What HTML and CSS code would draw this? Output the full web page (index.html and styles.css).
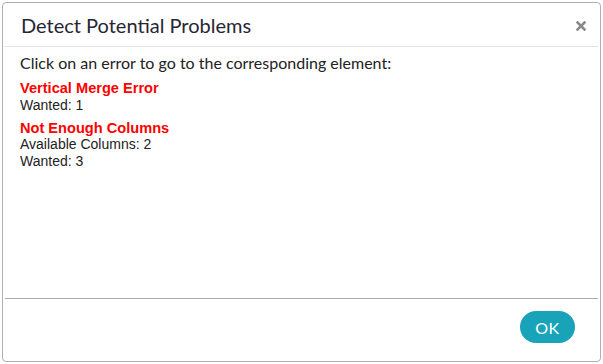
FILE: index.html
```html
<!DOCTYPE html>
<html>
<head>
<meta charset="utf-8">
<link rel="stylesheet" href="styles.css">
</head>
<body>
<div class="modal">
  <div class="modal-header">
    <h4 class="modal-title">Detect Potential Problems</h4>
    <button class="close" aria-label="Close">
      <svg width="10" height="10" viewBox="0 0 10 10"><path d="M1.5 1.5 L8.5 8.5 M8.5 1.5 L1.5 8.5" stroke="#8a8a8a" stroke-width="2.6" stroke-linecap="square"/></svg>
    </button>
  </div>
  <div class="modal-body">
    <p class="intro">Click on an error to go to the corresponding element:</p>
    <div class="error">
      <div class="error-title">Vertical Merge Error</div>
      <div class="error-line">Wanted: 1</div>
    </div>
    <div class="error">
      <div class="error-title">Not Enough Columns</div>
      <div class="error-line">Available Columns: 2</div>
      <div class="error-line">Wanted: 3</div>
    </div>
  </div>
  <div class="modal-footer">
    <button class="btn-ok">OK</button>
  </div>
</div>
</body>
</html>
```
FILE: styles.css
```css
html, body {
  margin: 0;
  padding: 0;
  background: #ffffff;
}
body {
  width: 603px;
  height: 364px;
  overflow: hidden;
}
.modal {
  box-sizing: border-box;
  width: 599px;
  height: 360px;
  margin: 2px 0 0 2px;
  border: 1px solid #b0b0b0;
  border-radius: 4px;
  background: #fff;
  display: flex;
  flex-direction: column;
}
.modal-header {
  display: flex;
  align-items: center;
  justify-content: space-between;
  margin: 0 2px;
  padding: 10px 12px 9px 16px;
  border-bottom: 1px solid #e3e3e6;
}
.modal-title {
  margin: 0;
  font-family: Lato, "Open Sans", sans-serif;
  font-weight: 400;
  font-size: 20px;
  line-height: 24px;
  color: #262633;
}
.close {
  border: 0;
  background: transparent;
  padding: 0;
  width: 10px;
  height: 10px;
  display: flex;
  margin-top: 2px;
}
.modal-body {
  flex: 1;
  padding: 6px 17px 0 17px;
}
.intro {
  margin: 0 0 7px 0;
  font-family: Lato, "Open Sans", sans-serif;
  font-size: 16px;
  line-height: 20px;
  color: #222;
}
.error {
  margin-top: 6px;
  font-family: "Liberation Sans", Arial, sans-serif;
  font-size: 14px;
  line-height: 16.8px;
  color: #222;
}
.error:first-of-type {
  margin-top: 0;
}
.error-title {
  color: #ff0000;
  font-weight: 700;
  font-size: 14.6px;
}
.modal-footer {
  display: flex;
  justify-content: flex-end;
  margin: 0 2px;
  padding: 12px 23px 18px 0;
  border-top: 1px solid #ababab;
}
.btn-ok {
  width: 55px;
  height: 32px;
  border: 0;
  border-radius: 16px;
  background: #19a3b8;
  color: #fff;
  font-family: Lato, "Open Sans", sans-serif;
  font-size: 16px;
  letter-spacing: 0.5px;
  padding: 0;
}
```
